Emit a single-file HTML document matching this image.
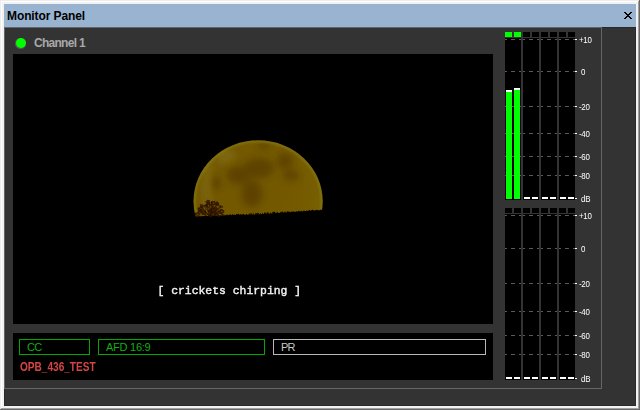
<!DOCTYPE html>
<html><head><meta charset="utf-8"><title>Monitor Panel</title>
<style>
html,body{margin:0;padding:0;}
body{width:640px;height:410px;overflow:hidden;background:#fff;position:relative;font-family:"Liberation Sans",sans-serif;}
.a{position:absolute;}
.lb{color:#fff;font-size:9px;line-height:11px;height:11px;white-space:nowrap;letter-spacing:-0.3px;transform-origin:0 0;transform:scaleX(0.88);}
.fld{box-sizing:border-box;height:16px;font-size:11px;line-height:14px;white-space:nowrap;}
</style></head><body>
<!-- window frame -->
<div class="a" style="left:0;top:0;width:640px;height:410px;background:#696969"></div>
<div class="a" style="left:0;top:0;width:639px;height:409px;background:#ededed"></div>
<div class="a" style="left:1px;top:1px;width:638px;height:408px;background:#a0a0a0"></div>
<div class="a" style="left:1px;top:1px;width:637px;height:407px;background:#fff"></div>
<div class="a" style="left:2px;top:2px;width:636px;height:406px;background:#f2f2f2"></div>
<!-- title bar -->
<div class="a" style="left:4px;top:4px;width:632px;height:23px;background:#99b4d1"></div>
<div class="a" style="left:7px;top:9px;font-size:12px;line-height:15px;font-weight:bold;color:#000;white-space:nowrap;letter-spacing:-0.1px" id="title">Monitor Panel</div>
<svg class="a" style="left:624px;top:12px" width="8" height="7" viewBox="0 0 8 7" shape-rendering="crispEdges"><path d="M0 0h2v1h-2zM6 0h2v1h-2zM1 1h2v1h-2zM5 1h2v1h-2zM2 2h4v1h-4zM3 3h2v1h-2zM2 4h4v1h-4zM1 5h2v1h-2zM5 5h2v1h-2zM0 6h2v1h-2zM6 6h2v1h-2z" fill="#000"/></svg>
<!-- client -->
<div class="a" style="left:4px;top:27px;width:632px;height:379px;background:#333;box-sizing:border-box;border:1px solid #2a2a2a"></div>
<div class="a" style="left:4px;top:27px;width:598px;height:362px;box-sizing:border-box;border:1px solid #666"></div>
<!-- channel header -->
<div class="a" style="left:15px;top:37.5px;width:11px;height:11px;border-radius:50%;background:#5a5a5a"></div>
<div class="a" style="left:16px;top:38px;width:10px;height:10px;border-radius:50%;background:#00ff00"></div>
<div class="a" style="left:34px;top:36px;font-size:12px;line-height:15px;color:#a8a8a8;white-space:nowrap;font-weight:bold;letter-spacing:-0.72px" id="chan">Channel 1</div>
<!-- video -->
<div class="a" style="left:13px;top:54px;width:480px;height:270px;background:#000;overflow:hidden">
<svg width="480" height="270" viewBox="0 0 480 270" style="display:block">
<defs>
<radialGradient id="mg" cx="42%" cy="42%" r="60%"><stop offset="0" stop-color="#725705"/><stop offset="0.7" stop-color="#745a05"/><stop offset="1" stop-color="#766007"/></radialGradient>
<filter id="b1" x="-20%" y="-20%" width="140%" height="140%"><feGaussianBlur stdDeviation="0.7"/></filter>
<filter id="b3" x="-50%" y="-50%" width="200%" height="200%"><feGaussianBlur stdDeviation="3.8"/></filter>
<filter id="bt" x="-20%" y="-20%" width="140%" height="140%"><feGaussianBlur stdDeviation="0.45"/></filter>
<filter id="bc" x="-5%" y="-30%" width="110%" height="160%"><feGaussianBlur stdDeviation="0.350"/></filter>
<filter id="bl" x="-10%" y="-10%" width="120%" height="120%"><feGaussianBlur stdDeviation="1.300"/></filter>
<clipPath id="hz"><path d="M0 0H480V155L309.500 156L279.500 157.900L242 160.400L212 161.200L180 162.500L0 163Z"/></clipPath>
<clipPath id="mc"><ellipse cx="245.100" cy="147.400" rx="64.600" ry="61.100"/></clipPath>
</defs>
<g filter="url(#b1)"><g clip-path="url(#hz)">
<ellipse cx="245.100" cy="147.400" rx="64.600" ry="61.100" fill="url(#mg)"/>
<g clip-path="url(#mc)"><g filter="url(#b3)" fill="#3a1c00" opacity="0.36">
<ellipse cx="251" cy="92" rx="6" ry="3.500"/>
<ellipse cx="246" cy="114" rx="15" ry="10"/>
<ellipse cx="226" cy="121" rx="12" ry="9"/>
<ellipse cx="239" cy="140" rx="10" ry="13"/>
<ellipse cx="272" cy="107" rx="8" ry="8"/>
<ellipse cx="278" cy="121.500" rx="8" ry="5"/>
<ellipse cx="202.500" cy="129" rx="5" ry="7"/>
</g>
<ellipse cx="245.100" cy="147.400" rx="63.600" ry="60.100" fill="none" stroke="#8c8010" stroke-width="3" opacity="0.55" filter="url(#bl)"/>
<g filter="url(#b3)" fill="#908014" opacity="0.35">
<ellipse cx="194" cy="125" rx="5" ry="26"/>
<ellipse cx="212" cy="102" rx="10" ry="8"/>
</g>
</g>
</g></g>
<g filter="url(#bt)"><path d="M197.4 162.8Q203.0 160.2 210.1 158.1M197.5 162.8Q200.5 158.9 209.3 155.7M197.1 162.8Q200.0 157.4 208.5 152.9M196.6 162.8Q201.5 156.9 207.8 152.0M197.7 162.8Q200.3 155.0 204.6 148.4M196.6 162.8Q199.3 156.7 202.6 151.7M197.4 162.8Q197.3 155.8 201.1 150.0M197.8 162.8Q198.0 154.2 198.8 147.0M197.1 162.8Q197.0 154.6 196.4 147.7M197.9 162.8Q196.9 154.3 192.7 147.2M196.6 162.8Q195.4 156.1 193.0 150.4M197.3 162.8Q196.1 156.6 190.1 151.4M196.9 162.8Q192.5 156.9 187.0 151.9M197.3 162.8Q195.4 158.4 186.7 154.8M197.0 162.8Q194.5 158.4 186.0 154.7M198.0 162.8Q195.1 159.9 186.0 157.4" stroke="#260c04" stroke-width="0.8" fill="none" opacity="0.85"/><g fill="#2a0e06" opacity="0.82"><circle cx="185.7" cy="158.7" r="0.67"/><circle cx="187.5" cy="153.6" r="0.91"/><circle cx="187.9" cy="150.7" r="0.69"/><circle cx="202.0" cy="160.9" r="0.89"/><circle cx="188.6" cy="158.3" r="1.28"/><circle cx="206.9" cy="157.8" r="1.22"/><circle cx="188.5" cy="156.3" r="1.20"/><circle cx="201.9" cy="161.1" r="1.29"/><circle cx="188.6" cy="158.5" r="1.14"/><circle cx="192.2" cy="157.9" r="0.65"/><circle cx="189.5" cy="152.9" r="0.86"/><circle cx="196.0" cy="147.0" r="0.94"/><circle cx="199.8" cy="148.5" r="0.73"/><circle cx="207.4" cy="158.7" r="0.73"/><circle cx="209.3" cy="152.8" r="0.90"/><circle cx="185.2" cy="162.2" r="1.27"/><circle cx="189.4" cy="151.2" r="0.78"/><circle cx="207.5" cy="153.0" r="0.81"/><circle cx="187.4" cy="150.9" r="0.65"/><circle cx="189.1" cy="153.6" r="1.20"/><circle cx="201.0" cy="158.2" r="1.24"/><circle cx="188.3" cy="162.5" r="0.79"/><circle cx="187.5" cy="156.7" r="1.00"/><circle cx="186.1" cy="156.8" r="1.22"/><circle cx="203.4" cy="153.2" r="0.70"/><circle cx="183.1" cy="162.5" r="1.24"/><circle cx="196.9" cy="150.7" r="0.82"/><circle cx="198.9" cy="150.6" r="1.23"/><circle cx="204.8" cy="151.2" r="1.16"/><circle cx="210.4" cy="157.0" r="1.08"/><circle cx="194.9" cy="149.8" r="1.20"/><circle cx="199.8" cy="152.5" r="0.87"/><circle cx="200.1" cy="152.8" r="0.66"/><circle cx="194.0" cy="150.7" r="1.01"/><circle cx="195.7" cy="149.0" r="0.66"/><circle cx="205.3" cy="162.3" r="1.02"/><circle cx="203.6" cy="154.6" r="1.03"/><circle cx="210.5" cy="158.6" r="0.61"/><circle cx="191.3" cy="151.6" r="0.74"/><circle cx="202.5" cy="155.5" r="1.22"/><circle cx="192.1" cy="151.8" r="0.74"/><circle cx="195.4" cy="149.5" r="1.24"/><circle cx="209.3" cy="156.5" r="1.01"/><circle cx="191.8" cy="160.6" r="0.95"/><circle cx="190.6" cy="160.0" r="0.92"/><circle cx="190.5" cy="159.3" r="0.89"/><circle cx="201.4" cy="154.7" r="0.82"/><circle cx="199.7" cy="157.7" r="1.15"/><circle cx="182.6" cy="160.6" r="0.92"/><circle cx="189.4" cy="160.5" r="0.63"/><circle cx="201.5" cy="155.4" r="1.04"/><circle cx="202.3" cy="149.5" r="1.27"/><circle cx="203.2" cy="159.5" r="0.93"/><circle cx="187.5" cy="162.6" r="0.93"/><circle cx="204.1" cy="159.8" r="0.79"/><circle cx="192.7" cy="151.3" r="0.96"/><circle cx="201.0" cy="150.3" r="0.88"/><circle cx="204.4" cy="160.7" r="0.92"/><circle cx="201.4" cy="147.8" r="0.86"/><circle cx="199.6" cy="148.3" r="1.16"/><circle cx="202.2" cy="159.4" r="1.11"/><circle cx="207.4" cy="152.2" r="1.10"/><circle cx="198.6" cy="149.8" r="0.82"/><circle cx="192.8" cy="161.4" r="0.91"/><circle cx="199.1" cy="150.1" r="0.94"/><circle cx="187.4" cy="157.3" r="1.15"/><circle cx="186.4" cy="160.3" r="0.96"/><circle cx="204.4" cy="148.9" r="1.08"/><circle cx="211.4" cy="161.4" r="0.75"/><circle cx="198.3" cy="158.0" r="1.11"/><circle cx="201.8" cy="154.2" r="1.19"/><circle cx="199.4" cy="157.7" r="0.87"/><circle cx="198.6" cy="154.5" r="1.02"/><circle cx="198.0" cy="156.2" r="1.16"/><circle cx="199.4" cy="154.7" r="1.08"/><circle cx="194.8" cy="147.0" r="1.25"/><circle cx="190.3" cy="155.0" r="0.69"/><circle cx="195.4" cy="149.3" r="1.23"/><circle cx="196.8" cy="157.6" r="0.73"/><circle cx="201.2" cy="147.5" r="0.69"/><circle cx="206.2" cy="162.4" r="0.74"/><circle cx="189.0" cy="151.5" r="0.83"/><circle cx="193.0" cy="152.6" r="0.67"/><circle cx="204.7" cy="160.8" r="0.96"/><circle cx="189.8" cy="159.5" r="0.97"/><circle cx="195.5" cy="156.6" r="0.89"/><circle cx="188.3" cy="152.4" r="1.05"/><circle cx="198.4" cy="148.8" r="1.03"/><circle cx="208.6" cy="159.0" r="1.12"/><circle cx="191.8" cy="157.6" r="1.25"/><circle cx="209.5" cy="160.6" r="0.77"/><circle cx="204.5" cy="158.5" r="0.67"/><circle cx="207.8" cy="155.8" r="1.15"/><circle cx="185.9" cy="156.2" r="1.08"/><circle cx="182.6" cy="159.5" r="1.08"/><circle cx="185.6" cy="154.5" r="1.13"/><circle cx="197.6" cy="151.5" r="0.73"/><circle cx="184.2" cy="161.0" r="0.63"/><circle cx="199.1" cy="154.3" r="1.00"/><circle cx="186.5" cy="159.8" r="0.74"/><circle cx="210.7" cy="161.2" r="0.64"/><circle cx="205.7" cy="157.4" r="0.93"/><circle cx="198.0" cy="155.7" r="1.02"/><circle cx="208.2" cy="159.8" r="0.92"/><circle cx="204.9" cy="156.1" r="0.74"/><circle cx="187.1" cy="154.3" r="0.61"/><circle cx="203.8" cy="148.6" r="1.04"/><circle cx="194.5" cy="152.9" r="0.95"/><circle cx="205.1" cy="150.0" r="1.17"/><circle cx="194.6" cy="148.0" r="1.22"/><circle cx="203.5" cy="150.1" r="1.14"/><circle cx="194.6" cy="150.9" r="0.65"/><circle cx="192.6" cy="155.1" r="0.61"/><circle cx="193.0" cy="152.3" r="1.04"/><circle cx="202.6" cy="157.2" r="1.06"/><circle cx="199.7" cy="154.0" r="0.87"/><circle cx="203.7" cy="150.2" r="1.29"/><circle cx="204.9" cy="158.6" r="0.88"/><circle cx="183.6" cy="159.6" r="0.86"/><circle cx="185.1" cy="158.7" r="1.23"/></g><g fill="#0a0500"><circle cx="214.1" cy="161.4" r="0.80"/><circle cx="217.1" cy="161.2" r="0.84"/><circle cx="219.6" cy="161.1" r="0.88"/><circle cx="221.7" cy="161.0" r="0.55"/><circle cx="223.8" cy="160.9" r="0.96"/><circle cx="225.3" cy="160.8" r="1.06"/><circle cx="227.9" cy="160.7" r="0.78"/><circle cx="230.3" cy="160.5" r="0.80"/><circle cx="233.4" cy="160.4" r="0.54"/><circle cx="236.3" cy="160.2" r="0.75"/><circle cx="238.0" cy="160.1" r="0.86"/><circle cx="240.2" cy="160.0" r="0.67"/><circle cx="243.0" cy="159.9" r="0.84"/><circle cx="244.9" cy="159.8" r="0.93"/><circle cx="247.3" cy="159.6" r="0.51"/><circle cx="249.6" cy="159.5" r="0.53"/><circle cx="251.9" cy="159.4" r="0.95"/><circle cx="254.6" cy="159.2" r="1.04"/><circle cx="257.6" cy="159.1" r="0.53"/><circle cx="260.4" cy="158.9" r="1.07"/><circle cx="261.3" cy="158.9" r="1.04"/><circle cx="264.3" cy="158.7" r="0.79"/><circle cx="267.6" cy="158.6" r="0.65"/><circle cx="269.2" cy="158.5" r="1.06"/><circle cx="272.0" cy="158.3" r="0.78"/><circle cx="274.8" cy="158.2" r="0.99"/><circle cx="276.6" cy="158.1" r="0.57"/><circle cx="279.0" cy="157.9" r="0.77"/><circle cx="280.7" cy="157.9" r="0.53"/><circle cx="283.6" cy="157.7" r="0.57"/><circle cx="285.9" cy="157.6" r="0.90"/><circle cx="288.3" cy="157.5" r="0.66"/><circle cx="290.9" cy="157.3" r="0.75"/><circle cx="293.6" cy="157.2" r="0.82"/><circle cx="296.4" cy="157.0" r="1.07"/><circle cx="298.4" cy="156.9" r="0.64"/><circle cx="299.8" cy="156.8" r="1.04"/><circle cx="303.3" cy="156.7" r="0.87"/><circle cx="305.0" cy="156.6" r="0.66"/><circle cx="307.9" cy="156.4" r="0.84"/></g></g>
<text x="216.300" y="240" text-anchor="middle" font-family="'Liberation Mono',monospace" font-size="11.400" fill="#f2f2f2" stroke="#f2f2f2" stroke-width="0.400" filter="url(#bc)" id="cap" xml:space="preserve">[ crickets chirping ]</text>
</svg>
</div>
<!-- status -->
<div class="a" style="left:13px;top:333px;width:480px;height:47px;background:#000"></div>
<div class="a fld" style="left:19px;top:339px;width:71px;border:1px solid #00a800;color:#10b010;padding-left:7px;letter-spacing:-0.8px" id="cc">CC</div>
<div class="a fld" style="left:98px;top:339px;width:167px;border:1px solid #00a800;color:#10b010;padding-left:7px;letter-spacing:-0.25px" id="afd">AFD 16:9</div>
<div class="a fld" style="left:273px;top:339px;width:213px;border:1px solid #b8b8b8;color:#c8c8c8;padding-left:7px;letter-spacing:-0.8px" id="pr">PR</div>
<div class="a" style="left:20px;top:360px;font-size:12px;line-height:15px;font-weight:bold;color:#d64545;white-space:nowrap;transform-origin:0 0;transform:scaleX(0.84)" id="opb">OPB_436_TEST</div>
<!-- meters -->
<div class="a" style="left:505px;top:32px;width:7px;height:5px;background:#00ff00"></div>
<div class="a" style="left:514px;top:32px;width:7px;height:5px;background:#00ff00"></div>
<div class="a" style="left:523px;top:32px;width:7px;height:5px;background:#000"></div>
<div class="a" style="left:532px;top:32px;width:7px;height:5px;background:#000"></div>
<div class="a" style="left:541px;top:32px;width:7px;height:5px;background:#000"></div>
<div class="a" style="left:550px;top:32px;width:7px;height:5px;background:#000"></div>
<div class="a" style="left:559px;top:32px;width:7px;height:5px;background:#000"></div>
<div class="a" style="left:568px;top:32px;width:7px;height:5px;background:#000"></div>
<div class="a" style="left:505px;top:38px;width:16px;height:162px;background:#000"></div>
<div class="a" style="left:505px;top:39px;width:2px;height:1px;background:#5a5a5a"></div>
<div class="a" style="left:511px;top:39px;width:4px;height:1px;background:#5a5a5a"></div>
<div class="a" style="left:519px;top:39px;width:2px;height:1px;background:#5a5a5a"></div>
<div class="a" style="left:505px;top:71px;width:2px;height:1px;background:#5a5a5a"></div>
<div class="a" style="left:511px;top:71px;width:4px;height:1px;background:#5a5a5a"></div>
<div class="a" style="left:519px;top:71px;width:2px;height:1px;background:#5a5a5a"></div>
<div class="a" style="left:505px;top:106px;width:2px;height:1px;background:#5a5a5a"></div>
<div class="a" style="left:511px;top:106px;width:4px;height:1px;background:#5a5a5a"></div>
<div class="a" style="left:519px;top:106px;width:2px;height:1px;background:#5a5a5a"></div>
<div class="a" style="left:505px;top:133px;width:2px;height:1px;background:#5a5a5a"></div>
<div class="a" style="left:511px;top:133px;width:4px;height:1px;background:#5a5a5a"></div>
<div class="a" style="left:519px;top:133px;width:2px;height:1px;background:#5a5a5a"></div>
<div class="a" style="left:505px;top:156px;width:2px;height:1px;background:#5a5a5a"></div>
<div class="a" style="left:511px;top:156px;width:4px;height:1px;background:#5a5a5a"></div>
<div class="a" style="left:519px;top:156px;width:2px;height:1px;background:#5a5a5a"></div>
<div class="a" style="left:505px;top:175px;width:2px;height:1px;background:#5a5a5a"></div>
<div class="a" style="left:511px;top:175px;width:4px;height:1px;background:#5a5a5a"></div>
<div class="a" style="left:519px;top:175px;width:2px;height:1px;background:#5a5a5a"></div>
<div class="a" style="left:523px;top:38px;width:16px;height:162px;background:#000"></div>
<div class="a" style="left:523px;top:39px;width:2px;height:1px;background:#5a5a5a"></div>
<div class="a" style="left:529px;top:39px;width:4px;height:1px;background:#5a5a5a"></div>
<div class="a" style="left:537px;top:39px;width:2px;height:1px;background:#5a5a5a"></div>
<div class="a" style="left:523px;top:71px;width:2px;height:1px;background:#5a5a5a"></div>
<div class="a" style="left:529px;top:71px;width:4px;height:1px;background:#5a5a5a"></div>
<div class="a" style="left:537px;top:71px;width:2px;height:1px;background:#5a5a5a"></div>
<div class="a" style="left:523px;top:106px;width:2px;height:1px;background:#5a5a5a"></div>
<div class="a" style="left:529px;top:106px;width:4px;height:1px;background:#5a5a5a"></div>
<div class="a" style="left:537px;top:106px;width:2px;height:1px;background:#5a5a5a"></div>
<div class="a" style="left:523px;top:133px;width:2px;height:1px;background:#5a5a5a"></div>
<div class="a" style="left:529px;top:133px;width:4px;height:1px;background:#5a5a5a"></div>
<div class="a" style="left:537px;top:133px;width:2px;height:1px;background:#5a5a5a"></div>
<div class="a" style="left:523px;top:156px;width:2px;height:1px;background:#5a5a5a"></div>
<div class="a" style="left:529px;top:156px;width:4px;height:1px;background:#5a5a5a"></div>
<div class="a" style="left:537px;top:156px;width:2px;height:1px;background:#5a5a5a"></div>
<div class="a" style="left:523px;top:175px;width:2px;height:1px;background:#5a5a5a"></div>
<div class="a" style="left:529px;top:175px;width:4px;height:1px;background:#5a5a5a"></div>
<div class="a" style="left:537px;top:175px;width:2px;height:1px;background:#5a5a5a"></div>
<div class="a" style="left:541px;top:38px;width:16px;height:162px;background:#000"></div>
<div class="a" style="left:541px;top:39px;width:2px;height:1px;background:#5a5a5a"></div>
<div class="a" style="left:547px;top:39px;width:4px;height:1px;background:#5a5a5a"></div>
<div class="a" style="left:555px;top:39px;width:2px;height:1px;background:#5a5a5a"></div>
<div class="a" style="left:541px;top:71px;width:2px;height:1px;background:#5a5a5a"></div>
<div class="a" style="left:547px;top:71px;width:4px;height:1px;background:#5a5a5a"></div>
<div class="a" style="left:555px;top:71px;width:2px;height:1px;background:#5a5a5a"></div>
<div class="a" style="left:541px;top:106px;width:2px;height:1px;background:#5a5a5a"></div>
<div class="a" style="left:547px;top:106px;width:4px;height:1px;background:#5a5a5a"></div>
<div class="a" style="left:555px;top:106px;width:2px;height:1px;background:#5a5a5a"></div>
<div class="a" style="left:541px;top:133px;width:2px;height:1px;background:#5a5a5a"></div>
<div class="a" style="left:547px;top:133px;width:4px;height:1px;background:#5a5a5a"></div>
<div class="a" style="left:555px;top:133px;width:2px;height:1px;background:#5a5a5a"></div>
<div class="a" style="left:541px;top:156px;width:2px;height:1px;background:#5a5a5a"></div>
<div class="a" style="left:547px;top:156px;width:4px;height:1px;background:#5a5a5a"></div>
<div class="a" style="left:555px;top:156px;width:2px;height:1px;background:#5a5a5a"></div>
<div class="a" style="left:541px;top:175px;width:2px;height:1px;background:#5a5a5a"></div>
<div class="a" style="left:547px;top:175px;width:4px;height:1px;background:#5a5a5a"></div>
<div class="a" style="left:555px;top:175px;width:2px;height:1px;background:#5a5a5a"></div>
<div class="a" style="left:559px;top:38px;width:16px;height:162px;background:#000"></div>
<div class="a" style="left:559px;top:39px;width:2px;height:1px;background:#5a5a5a"></div>
<div class="a" style="left:565px;top:39px;width:4px;height:1px;background:#5a5a5a"></div>
<div class="a" style="left:573px;top:39px;width:2px;height:1px;background:#5a5a5a"></div>
<div class="a" style="left:559px;top:71px;width:2px;height:1px;background:#5a5a5a"></div>
<div class="a" style="left:565px;top:71px;width:4px;height:1px;background:#5a5a5a"></div>
<div class="a" style="left:573px;top:71px;width:2px;height:1px;background:#5a5a5a"></div>
<div class="a" style="left:559px;top:106px;width:2px;height:1px;background:#5a5a5a"></div>
<div class="a" style="left:565px;top:106px;width:4px;height:1px;background:#5a5a5a"></div>
<div class="a" style="left:573px;top:106px;width:2px;height:1px;background:#5a5a5a"></div>
<div class="a" style="left:559px;top:133px;width:2px;height:1px;background:#5a5a5a"></div>
<div class="a" style="left:565px;top:133px;width:4px;height:1px;background:#5a5a5a"></div>
<div class="a" style="left:573px;top:133px;width:2px;height:1px;background:#5a5a5a"></div>
<div class="a" style="left:559px;top:156px;width:2px;height:1px;background:#5a5a5a"></div>
<div class="a" style="left:565px;top:156px;width:4px;height:1px;background:#5a5a5a"></div>
<div class="a" style="left:573px;top:156px;width:2px;height:1px;background:#5a5a5a"></div>
<div class="a" style="left:559px;top:175px;width:2px;height:1px;background:#5a5a5a"></div>
<div class="a" style="left:565px;top:175px;width:4px;height:1px;background:#5a5a5a"></div>
<div class="a" style="left:573px;top:175px;width:2px;height:1px;background:#5a5a5a"></div>
<div class="a" style="left:575px;top:39px;width:2px;height:1px;background:#fff"></div>
<div class="a" style="left:575px;top:71px;width:2px;height:1px;background:#fff"></div>
<div class="a" style="left:575px;top:106px;width:2px;height:1px;background:#fff"></div>
<div class="a" style="left:575px;top:133px;width:2px;height:1px;background:#fff"></div>
<div class="a" style="left:575px;top:156px;width:2px;height:1px;background:#fff"></div>
<div class="a" style="left:575px;top:175px;width:2px;height:1px;background:#fff"></div>
<div class="a" style="left:575px;top:198px;width:2px;height:1px;background:#fff"></div>
<div class="a" style="left:506px;top:90px;width:6px;height:2px;background:#fff"></div>
<div class="a" style="left:506px;top:92px;width:6px;height:107px;background:#00ff00"></div>
<div class="a" style="left:514px;top:88px;width:6px;height:2px;background:#fff"></div>
<div class="a" style="left:514px;top:90px;width:6px;height:109px;background:#00ff00"></div>
<div class="a" style="left:524px;top:197px;width:6px;height:2px;background:#fff"></div>
<div class="a" style="left:532px;top:197px;width:6px;height:2px;background:#fff"></div>
<div class="a" style="left:542px;top:197px;width:6px;height:2px;background:#fff"></div>
<div class="a" style="left:550px;top:197px;width:6px;height:2px;background:#fff"></div>
<div class="a" style="left:560px;top:197px;width:6px;height:2px;background:#fff"></div>
<div class="a" style="left:568px;top:197px;width:6px;height:2px;background:#fff"></div>
<div class="a lb" style="left:579px;top:35.2px">+10</div>
<div class="a lb" style="left:580.8px;top:67.2px">0</div>
<div class="a lb" style="left:579px;top:102.2px">-20</div>
<div class="a lb" style="left:579px;top:129.2px">-40</div>
<div class="a lb" style="left:579px;top:152.2px">-60</div>
<div class="a lb" style="left:579px;top:171.2px">-80</div>
<div class="a lb" style="left:580.8px;top:194.2px">dB</div>
<div class="a" style="left:505px;top:208px;width:7px;height:5px;background:#000"></div>
<div class="a" style="left:514px;top:208px;width:7px;height:5px;background:#000"></div>
<div class="a" style="left:523px;top:208px;width:7px;height:5px;background:#000"></div>
<div class="a" style="left:532px;top:208px;width:7px;height:5px;background:#000"></div>
<div class="a" style="left:541px;top:208px;width:7px;height:5px;background:#000"></div>
<div class="a" style="left:550px;top:208px;width:7px;height:5px;background:#000"></div>
<div class="a" style="left:559px;top:208px;width:7px;height:5px;background:#000"></div>
<div class="a" style="left:568px;top:208px;width:7px;height:5px;background:#000"></div>
<div class="a" style="left:505px;top:214px;width:16px;height:166px;background:#000"></div>
<div class="a" style="left:505px;top:215px;width:2px;height:1px;background:#5a5a5a"></div>
<div class="a" style="left:511px;top:215px;width:4px;height:1px;background:#5a5a5a"></div>
<div class="a" style="left:519px;top:215px;width:2px;height:1px;background:#5a5a5a"></div>
<div class="a" style="left:505px;top:248px;width:2px;height:1px;background:#5a5a5a"></div>
<div class="a" style="left:511px;top:248px;width:4px;height:1px;background:#5a5a5a"></div>
<div class="a" style="left:519px;top:248px;width:2px;height:1px;background:#5a5a5a"></div>
<div class="a" style="left:505px;top:283px;width:2px;height:1px;background:#5a5a5a"></div>
<div class="a" style="left:511px;top:283px;width:4px;height:1px;background:#5a5a5a"></div>
<div class="a" style="left:519px;top:283px;width:2px;height:1px;background:#5a5a5a"></div>
<div class="a" style="left:505px;top:311px;width:2px;height:1px;background:#5a5a5a"></div>
<div class="a" style="left:511px;top:311px;width:4px;height:1px;background:#5a5a5a"></div>
<div class="a" style="left:519px;top:311px;width:2px;height:1px;background:#5a5a5a"></div>
<div class="a" style="left:505px;top:335px;width:2px;height:1px;background:#5a5a5a"></div>
<div class="a" style="left:511px;top:335px;width:4px;height:1px;background:#5a5a5a"></div>
<div class="a" style="left:519px;top:335px;width:2px;height:1px;background:#5a5a5a"></div>
<div class="a" style="left:505px;top:354px;width:2px;height:1px;background:#5a5a5a"></div>
<div class="a" style="left:511px;top:354px;width:4px;height:1px;background:#5a5a5a"></div>
<div class="a" style="left:519px;top:354px;width:2px;height:1px;background:#5a5a5a"></div>
<div class="a" style="left:523px;top:214px;width:16px;height:166px;background:#000"></div>
<div class="a" style="left:523px;top:215px;width:2px;height:1px;background:#5a5a5a"></div>
<div class="a" style="left:529px;top:215px;width:4px;height:1px;background:#5a5a5a"></div>
<div class="a" style="left:537px;top:215px;width:2px;height:1px;background:#5a5a5a"></div>
<div class="a" style="left:523px;top:248px;width:2px;height:1px;background:#5a5a5a"></div>
<div class="a" style="left:529px;top:248px;width:4px;height:1px;background:#5a5a5a"></div>
<div class="a" style="left:537px;top:248px;width:2px;height:1px;background:#5a5a5a"></div>
<div class="a" style="left:523px;top:283px;width:2px;height:1px;background:#5a5a5a"></div>
<div class="a" style="left:529px;top:283px;width:4px;height:1px;background:#5a5a5a"></div>
<div class="a" style="left:537px;top:283px;width:2px;height:1px;background:#5a5a5a"></div>
<div class="a" style="left:523px;top:311px;width:2px;height:1px;background:#5a5a5a"></div>
<div class="a" style="left:529px;top:311px;width:4px;height:1px;background:#5a5a5a"></div>
<div class="a" style="left:537px;top:311px;width:2px;height:1px;background:#5a5a5a"></div>
<div class="a" style="left:523px;top:335px;width:2px;height:1px;background:#5a5a5a"></div>
<div class="a" style="left:529px;top:335px;width:4px;height:1px;background:#5a5a5a"></div>
<div class="a" style="left:537px;top:335px;width:2px;height:1px;background:#5a5a5a"></div>
<div class="a" style="left:523px;top:354px;width:2px;height:1px;background:#5a5a5a"></div>
<div class="a" style="left:529px;top:354px;width:4px;height:1px;background:#5a5a5a"></div>
<div class="a" style="left:537px;top:354px;width:2px;height:1px;background:#5a5a5a"></div>
<div class="a" style="left:541px;top:214px;width:16px;height:166px;background:#000"></div>
<div class="a" style="left:541px;top:215px;width:2px;height:1px;background:#5a5a5a"></div>
<div class="a" style="left:547px;top:215px;width:4px;height:1px;background:#5a5a5a"></div>
<div class="a" style="left:555px;top:215px;width:2px;height:1px;background:#5a5a5a"></div>
<div class="a" style="left:541px;top:248px;width:2px;height:1px;background:#5a5a5a"></div>
<div class="a" style="left:547px;top:248px;width:4px;height:1px;background:#5a5a5a"></div>
<div class="a" style="left:555px;top:248px;width:2px;height:1px;background:#5a5a5a"></div>
<div class="a" style="left:541px;top:283px;width:2px;height:1px;background:#5a5a5a"></div>
<div class="a" style="left:547px;top:283px;width:4px;height:1px;background:#5a5a5a"></div>
<div class="a" style="left:555px;top:283px;width:2px;height:1px;background:#5a5a5a"></div>
<div class="a" style="left:541px;top:311px;width:2px;height:1px;background:#5a5a5a"></div>
<div class="a" style="left:547px;top:311px;width:4px;height:1px;background:#5a5a5a"></div>
<div class="a" style="left:555px;top:311px;width:2px;height:1px;background:#5a5a5a"></div>
<div class="a" style="left:541px;top:335px;width:2px;height:1px;background:#5a5a5a"></div>
<div class="a" style="left:547px;top:335px;width:4px;height:1px;background:#5a5a5a"></div>
<div class="a" style="left:555px;top:335px;width:2px;height:1px;background:#5a5a5a"></div>
<div class="a" style="left:541px;top:354px;width:2px;height:1px;background:#5a5a5a"></div>
<div class="a" style="left:547px;top:354px;width:4px;height:1px;background:#5a5a5a"></div>
<div class="a" style="left:555px;top:354px;width:2px;height:1px;background:#5a5a5a"></div>
<div class="a" style="left:559px;top:214px;width:16px;height:166px;background:#000"></div>
<div class="a" style="left:559px;top:215px;width:2px;height:1px;background:#5a5a5a"></div>
<div class="a" style="left:565px;top:215px;width:4px;height:1px;background:#5a5a5a"></div>
<div class="a" style="left:573px;top:215px;width:2px;height:1px;background:#5a5a5a"></div>
<div class="a" style="left:559px;top:248px;width:2px;height:1px;background:#5a5a5a"></div>
<div class="a" style="left:565px;top:248px;width:4px;height:1px;background:#5a5a5a"></div>
<div class="a" style="left:573px;top:248px;width:2px;height:1px;background:#5a5a5a"></div>
<div class="a" style="left:559px;top:283px;width:2px;height:1px;background:#5a5a5a"></div>
<div class="a" style="left:565px;top:283px;width:4px;height:1px;background:#5a5a5a"></div>
<div class="a" style="left:573px;top:283px;width:2px;height:1px;background:#5a5a5a"></div>
<div class="a" style="left:559px;top:311px;width:2px;height:1px;background:#5a5a5a"></div>
<div class="a" style="left:565px;top:311px;width:4px;height:1px;background:#5a5a5a"></div>
<div class="a" style="left:573px;top:311px;width:2px;height:1px;background:#5a5a5a"></div>
<div class="a" style="left:559px;top:335px;width:2px;height:1px;background:#5a5a5a"></div>
<div class="a" style="left:565px;top:335px;width:4px;height:1px;background:#5a5a5a"></div>
<div class="a" style="left:573px;top:335px;width:2px;height:1px;background:#5a5a5a"></div>
<div class="a" style="left:559px;top:354px;width:2px;height:1px;background:#5a5a5a"></div>
<div class="a" style="left:565px;top:354px;width:4px;height:1px;background:#5a5a5a"></div>
<div class="a" style="left:573px;top:354px;width:2px;height:1px;background:#5a5a5a"></div>
<div class="a" style="left:575px;top:215px;width:2px;height:1px;background:#fff"></div>
<div class="a" style="left:575px;top:248px;width:2px;height:1px;background:#fff"></div>
<div class="a" style="left:575px;top:283px;width:2px;height:1px;background:#fff"></div>
<div class="a" style="left:575px;top:311px;width:2px;height:1px;background:#fff"></div>
<div class="a" style="left:575px;top:335px;width:2px;height:1px;background:#fff"></div>
<div class="a" style="left:575px;top:354px;width:2px;height:1px;background:#fff"></div>
<div class="a" style="left:575px;top:378px;width:2px;height:1px;background:#fff"></div>
<div class="a" style="left:506px;top:377px;width:6px;height:2px;background:#fff"></div>
<div class="a" style="left:514px;top:377px;width:6px;height:2px;background:#fff"></div>
<div class="a" style="left:524px;top:377px;width:6px;height:2px;background:#fff"></div>
<div class="a" style="left:532px;top:377px;width:6px;height:2px;background:#fff"></div>
<div class="a" style="left:542px;top:377px;width:6px;height:2px;background:#fff"></div>
<div class="a" style="left:550px;top:377px;width:6px;height:2px;background:#fff"></div>
<div class="a" style="left:560px;top:377px;width:6px;height:2px;background:#fff"></div>
<div class="a" style="left:568px;top:377px;width:6px;height:2px;background:#fff"></div>
<div class="a lb" style="left:579px;top:211.2px">+10</div>
<div class="a lb" style="left:580.8px;top:244.2px">0</div>
<div class="a lb" style="left:579px;top:279.2px">-20</div>
<div class="a lb" style="left:579px;top:307.2px">-40</div>
<div class="a lb" style="left:579px;top:331.2px">-60</div>
<div class="a lb" style="left:579px;top:350.2px">-80</div>
<div class="a lb" style="left:580.8px;top:374.2px">dB</div>
</body></html>
